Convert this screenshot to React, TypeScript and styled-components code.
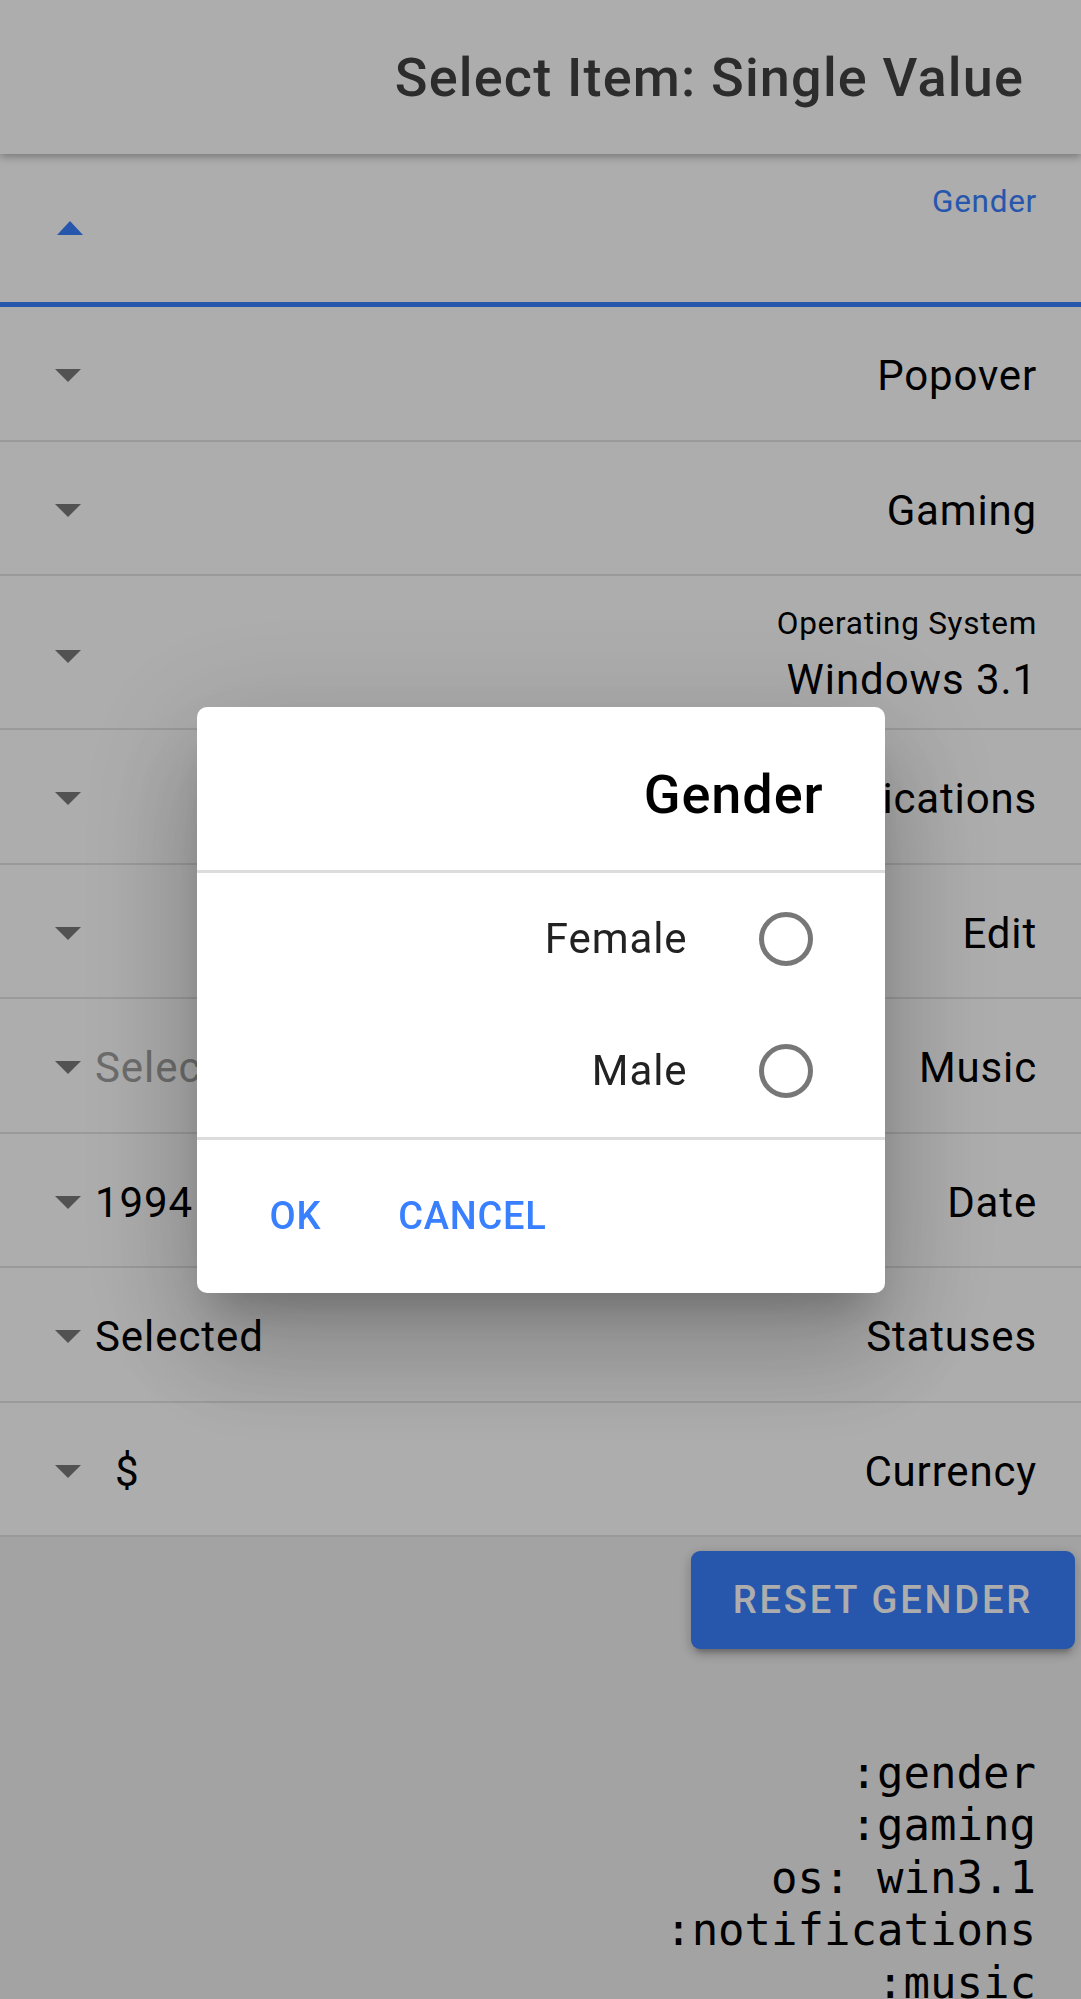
import React from 'react';
import styled, { createGlobalStyle } from 'styled-components';

const GlobalStyle = createGlobalStyle`
  html, body { margin: 0; padding: 0; }
  body {
    background: #f1f1f1;
    font-family: Roboto, "Noto Sans", sans-serif;
    -webkit-font-smoothing: antialiased;
  }
  *, *::before, *::after { box-sizing: border-box; }
`;

const Page = styled.div`
  direction: rtl;
  min-height: 1999px;
  background: #f1f1f1;
  overflow: hidden;
`;

const Header = styled.header`
  position: relative;
  z-index: 1;
  height: 154px;
  background: #fff;
  display: flex;
  align-items: center;
  padding: 1px 57px 0;
  box-shadow: 0 3px 8px rgba(0, 0, 0, 0.3);
`;

const Title = styled.h1`
  margin: 0;
  font: 500 54px/62px Roboto, sans-serif;
  letter-spacing: 0.022em;
  color: #424242;
`;

const List = styled.div`
  background: #fff;
`;

const Item = styled.div<{ $h: number; $focused?: boolean }>`
  display: flex;
  align-items: center;
  min-height: ${(p) => p.$h}px;
  padding: ${(p) => (p.$focused ? '0' : '5px')} 44px 0 55px;
  border-bottom: ${(p) => (p.$focused ? '5px solid #3880ff' : '2px solid #e4e4e4')};
`;

const Label = styled.div`
  flex: 1;
  font: 400 42px/49px Roboto, sans-serif;
  letter-spacing: 0.02em;
  color: #000;
  text-align: right;
  white-space: nowrap;
`;

const Stacked = styled.div<{ $top?: number }>`
  flex: 1;
  display: flex;
  flex-direction: column;
  align-items: flex-start;
  align-self: ${(p) => (p.$top !== undefined ? 'flex-start' : 'center')};
  padding-top: ${(p) => p.$top ?? 0}px;
`;

const SmallLabel = styled.div<{ $active?: boolean }>`
  font: 400 31.5px/37px Roboto, sans-serif;
  letter-spacing: 0.023em;
  color: ${(p) => (p.$active ? '#3880ff' : '#000')};
`;

const StackedValue = styled.div`
  margin-top: 13px;
  font: 400 42px/49px Roboto, sans-serif;
  letter-spacing: 0.022em;
  color: #000;
`;

const Select = styled.div`
  display: flex;
  align-items: center;
  gap: 14px;
  flex: none;
`;

const Value = styled.span<{ $placeholder?: boolean; $indent?: number }>`
  font: 400 42px/49px Roboto, sans-serif;
  letter-spacing: 0.022em;
  color: ${(p) => (p.$placeholder ? '#a0a0a0' : '#000')};
  padding-left: ${(p) => p.$indent ?? 0}px;
  white-space: nowrap;
`;

const Caret = styled.span<{ $up?: boolean; $shift?: number }>`
  display: block;
  width: 0;
  height: 0;
  margin-top: ${(p) => p.$shift ?? 0}px;
  border-left: 13.5px solid transparent;
  border-right: 13.5px solid transparent;
  ${(p) =>
    p.$up
      ? 'border-bottom: 14px solid #3880ff; margin-left: 2px;'
      : 'border-top: 13px solid #7a7a7a;'}
`;

const ButtonRow = styled.div`
  display: flex;
  justify-content: flex-start;
  padding: 14px 6px 0;
`;

const RaisedButton = styled.button`
  height: 98px;
  padding: 0 42px;
  border: none;
  border-radius: 9px;
  background: #3880ff;
  color: #fff;
  font: 500 38px Roboto, sans-serif;
  letter-spacing: 0.074em;
  text-transform: uppercase;
  box-shadow: 0 8px 5px -5px rgba(0, 0, 0, 0.2), 0 5px 13px 0 rgba(0, 0, 0, 0.14),
    0 3px 13px 0 rgba(0, 0, 0, 0.12);
`;

const Output = styled.pre`
  margin: 98px 0 0;
  padding: 0 45px 0 0;
  font: 400 44px/52.4px "DejaVu Sans Mono", "Liberation Mono", monospace;
  color: #000;
  text-align: right;
`;

const Backdrop = styled.div`
  position: fixed;
  inset: 0;
  z-index: 10;
  background: rgba(0, 0, 0, 0.32);
  display: flex;
  align-items: center;
  justify-content: center;
`;

const Dialog = styled.div`
  width: 688px;
  background: #fff;
  border-radius: 10px;
  direction: rtl;
  box-shadow: 0 29px 39px -18px rgba(0, 0, 0, 0.2), 0 63px 100px 8px rgba(0, 0, 0, 0.14),
    0 24px 121px 21px rgba(0, 0, 0, 0.12);
`;

const DialogHead = styled.div`
  padding: 57px 61px 44px;
`;

const DialogTitle = styled.h2`
  margin: 0;
  font: 500 54px/62px Roboto, sans-serif;
  letter-spacing: 0.017em;
  color: #000;
  text-align: right;
`;

const RadioGroup = styled.div`
  border-top: 3px solid #dcdcdc;
  border-bottom: 3px solid #dcdcdc;
`;

const RadioOption = styled.div`
  height: 132px;
  display: flex;
  align-items: center;
  gap: 71px;
  padding-right: 72px;
`;

const RadioCircle = styled.span`
  width: 54px;
  height: 54px;
  border-radius: 50%;
  border: 5px solid #777;
  flex: none;
`;

const RadioText = styled.span`
  font: 400 42px/49px Roboto, sans-serif;
  letter-spacing: 0.022em;
  color: #222;
`;

const ButtonGroup = styled.div`
  height: 153px;
  display: flex;
  align-items: center;
  justify-content: flex-end;
  gap: 77px;
  padding-left: 73px;
`;

const TextButton = styled.button`
  padding: 0;
  border: none;
  background: none;
  color: #3880ff;
  font: 500 38px Roboto, sans-serif;
  letter-spacing: 0.02em;
  text-transform: uppercase;
`;

type Row = { label: string; value?: string; placeholder?: boolean; indent?: number };

const rows: Row[] = [
  { label: 'Popover' },
  { label: 'Gaming' },
];

const rows2: Row[] = [
  { label: 'Notifications' },
  { label: 'Edit' },
  { label: 'Music', value: 'Select Music', placeholder: true },
  { label: 'Date', value: '1994' },
  { label: 'Statuses', value: 'Selected' },
  { label: 'Currency', value: '$', indent: 20 },
];

function SelectRow({ row }: { row: Row }) {
  return (
    <Item $h={134.5}>
      <Label>{row.label}</Label>
      <Select>
        {row.value && (
          <Value $placeholder={row.placeholder} $indent={row.indent}>
            {row.value}
          </Value>
        )}
        <Caret />
      </Select>
    </Item>
  );
}

export default function App() {
  return (
    <>
      <GlobalStyle />
      <Page>
        <Header>
          <Title>Select Item: Single Value</Title>
        </Header>
        <List>
          <Item $h={153} $focused>
            <Stacked $top={29}>
              <SmallLabel $active>Gender</SmallLabel>
            </Stacked>
            <Select>
              <Caret $up />
            </Select>
          </Item>
          {rows.map((r) => (
            <SelectRow key={r.label} row={r} />
          ))}
          <Item $h={154}>
            <Stacked>
              <SmallLabel>Operating System</SmallLabel>
              <StackedValue>Windows 3.1</StackedValue>
            </Stacked>
            <Select>
              <Caret $shift={4} />
            </Select>
          </Item>
          {rows2.map((r) => (
            <SelectRow key={r.label} row={r} />
          ))}
        </List>
        <ButtonRow>
          <RaisedButton>Reset Gender</RaisedButton>
        </ButtonRow>
        <Output>{'gender:\ngaming:\nos: win3.1\nnotifications:\nmusic:'}</Output>
      </Page>
      <Backdrop>
        <Dialog>
          <DialogHead>
            <DialogTitle>Gender</DialogTitle>
          </DialogHead>
          <RadioGroup>
            <RadioOption>
              <RadioCircle />
              <RadioText>Female</RadioText>
            </RadioOption>
            <RadioOption>
              <RadioCircle />
              <RadioText>Male</RadioText>
            </RadioOption>
          </RadioGroup>
          <ButtonGroup>
            <TextButton>Cancel</TextButton>
            <TextButton>OK</TextButton>
          </ButtonGroup>
        </Dialog>
      </Backdrop>
    </>
  );
}
